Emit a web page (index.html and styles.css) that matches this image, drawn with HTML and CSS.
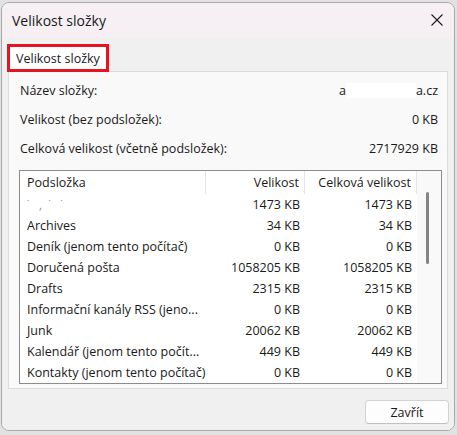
FILE: index.html
```html
<!DOCTYPE html>
<html lang="cs">
<head>
<meta charset="utf-8">
<title>Velikost složky</title>
<link rel="stylesheet" href="styles.css">
</head>
<body>
<div class="window">
  <div class="titlebar">
    <span class="title">Velikost složky</span>
    <span class="close" aria-label="Zavřít">
      <svg width="12" height="12" viewBox="0 0 12 12"><path d="M0.5 0.5 L11.5 11.5 M11.5 0.5 L0.5 11.5" stroke="#1b1b1b" stroke-width="1.1" fill="none"/></svg>
    </span>
  </div>
  <div class="client">
    <div class="tabs"><div class="tab">Velikost složky</div></div>
    <div class="panel">
      <div class="info">
        <div class="info-row"><span>Název složky:</span><span class="val">a<span class="mask"></span>a.cz</span></div>
        <div class="info-row"><span>Velikost (bez podsložek):</span><span class="val">0 KB</span></div>
        <div class="info-row"><span>Celková velikost (včetně podsložek):</span><span class="val">2717929 KB</span></div>
      </div>
      <div class="list">
        <div class="list-main">
          <div class="list-head">
            <div class="c1">Podsložka</div>
            <div class="c2">Velikost</div>
            <div class="c3">Celková velikost</div>
          </div>
          <div class="row"><div class="c1 blur">˙&nbsp;&nbsp;&nbsp;‚&nbsp;&nbsp;˙&nbsp;&nbsp;&nbsp;˙</div><div class="c2">1473 KB</div><div class="c3">1473 KB</div></div>
          <div class="row"><div class="c1">Archives</div><div class="c2">34 KB</div><div class="c3">34 KB</div></div>
          <div class="row"><div class="c1">Deník (jenom tento počítač)</div><div class="c2">0 KB</div><div class="c3">0 KB</div></div>
          <div class="row"><div class="c1">Doručená pošta</div><div class="c2">1058205 KB</div><div class="c3">1058205 KB</div></div>
          <div class="row"><div class="c1">Drafts</div><div class="c2">2315 KB</div><div class="c3">2315 KB</div></div>
          <div class="row"><div class="c1">Informační kanály RSS (jeno...</div><div class="c2">0 KB</div><div class="c3">0 KB</div></div>
          <div class="row"><div class="c1">Junk</div><div class="c2">20062 KB</div><div class="c3">20062 KB</div></div>
          <div class="row"><div class="c1">Kalendář (jenom tento počít...</div><div class="c2">449 KB</div><div class="c3">449 KB</div></div>
          <div class="row"><div class="c1">Kontakty (jenom tento počítač)</div><div class="c2">0 KB</div><div class="c3">0 KB</div></div>
        </div>
        <div class="scroll"><div class="thumb"></div></div>
      </div>
    </div>
    <div class="footer"><button class="btn">Zavřít</button></div>
  </div>
</div>
</body>
</html>
```
FILE: styles.css
```css
* { box-sizing: border-box; }
html, body { margin: 0; padding: 0; }
body {
  width: 457px;
  height: 435px;
  background: #e2e2e2;
  font-family: "Open Sans", "Noto Sans", "Liberation Sans", sans-serif;
  color: #1a1a1a;
  overflow: hidden;
  padding: 2px 0 0 1px;
}
.window {
  width: 454px;
  height: 429px;
  border: 1px solid #a9a9a9;
  border-radius: 8px;
  overflow: hidden;
  background: #f0f0f0;
  display: flex;
  flex-direction: column;
}
.titlebar {
  height: 35px;
  flex: none;
  background: #f6eff4;
  display: flex;
  align-items: center;
  justify-content: space-between;
  padding: 0 11px 0 10px;
}
.title {
  font-size: 14px;
  color: #1a1a1a;
}
.close { display: flex; margin-top: -1px; }
.client {
  flex: 1;
  display: flex;
  flex-direction: column;
  background: #f0f0f0;
}
.tabs {
  display: flex;
  padding: 6px 0 0 5px;
}
.tab {
  position: relative;
  z-index: 1;
  height: 28px;
  margin-bottom: -1px;
  padding: 0 0 0 6px;
  width: 102px;
  border: 3px solid #e5141f;
  background: #ffffff;
  font-size: 12.5px;
  display: flex;
  align-items: center;
}
.panel {
  margin-left: 6px;
  width: 440px;
  height: 318px;
  border: 1px solid #dcdcdc;
  background: #f9f9f9;
  display: flex;
  flex-direction: column;
}
.info { padding-top: 4px; }
.info-row {
  height: 29px;
  display: flex;
  align-items: center;
  justify-content: space-between;
  padding: 0 9px 0 11px;
  font-size: 12.5px;
}
.val { display: flex; align-items: center; }
.mask {
  display: inline-block;
  width: 70px;
  height: 15px;
  background: #ffffff;
}
.list {
  margin: 7px 5px 0 10px;
  height: 214px;
  border: 1px solid #8c8c8c;
  background: #ffffff;
  display: flex;
  overflow: hidden;
}
.list-main { width: 397px; }
.list-head, .row {
  display: flex;
  font-size: 12.5px;
}
.list-head { height: 23px; align-items: center; }
.row { height: 21px; align-items: center; }
.c1 {
  width: 186px;
  padding-left: 7px;
  white-space: nowrap;
  overflow: hidden;
}
.c2 {
  width: 99px;
  text-align: right;
  padding-right: 5px;
  white-space: nowrap;
}
.c3 {
  width: 112px;
  text-align: right;
  padding-right: 5px;
  white-space: nowrap;
}
.list-head .c1, .list-head .c2 {
  border-right: 1px solid #e5e5e5;
  align-self: stretch;
  display: flex;
  align-items: center;
}
.list-head .c2 { justify-content: flex-end; }
.list-head .c3 { border-right: 1px solid #e5e5e5; align-self: stretch; display: flex; align-items: center; justify-content: flex-end; }
.blur { color: #9a9a9a; }
.scroll {
  flex: 1;
  background: #f9f9f9;
  position: relative;
}
.thumb {
  position: absolute;
  left: 9px;
  top: 21px;
  width: 3px;
  height: 72px;
  border-radius: 2px;
  background: #858585;
}
.footer {
  display: flex;
  justify-content: flex-end;
  padding: 11px 5px 0 0;
}
.btn {
  width: 84px;
  height: 24px;
  border: 1px solid #d3d3d3;
  border-bottom-color: #c0c0c0;
  border-radius: 4px;
  background: #fdfdfd;
  font-family: inherit;
  font-size: 12.5px;
  color: #1a1a1a;
  padding: 0;
}
```
